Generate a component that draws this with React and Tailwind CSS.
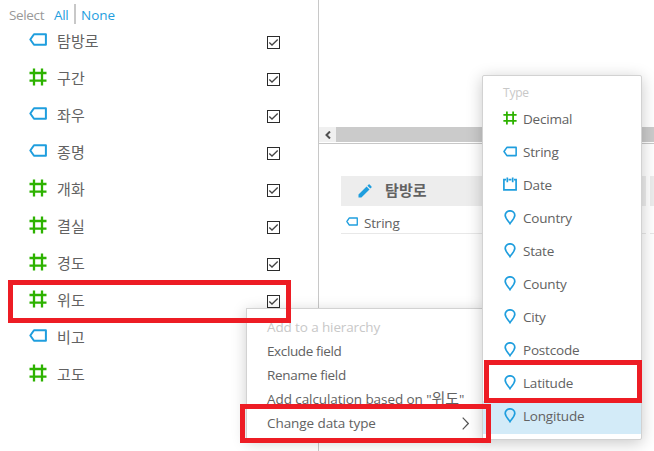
import React from "react";

const Tag = ({ className }) => (
  <svg viewBox="0 0 18 13" className={className} fill="none" stroke="#1f9ede" strokeWidth="2">
    <path d="M5 1.2H16.9V11.8H5L1.3 6.5Z" strokeLinejoin="round" />
  </svg>
);

const Hash = ({ className }) => (
  <svg viewBox="0 0 18 18" className={className} fill="none" stroke="#2db200" strokeWidth="2.3">
    <path d="M5 0.5V17.5M13 0.5V17.5M0.5 5H17.5M0.5 12.7H17.5" />
  </svg>
);

const Pin = ({ className }) => (
  <svg viewBox="0 0 12 15" className={className} fill="none" stroke="#1f9ede" strokeWidth="1.7">
    <path d="M6 13.6C4.6 11.2 1.2 8.4 1.2 5.3A4.8 4.5 0 0 1 10.8 5.3C10.8 8.4 7.4 11.2 6 13.6Z" />
  </svg>
);

const Calendar = ({ className }) => (
  <svg viewBox="0 0 14 14" className={className} fill="none" stroke="#1f9ede" strokeWidth="1.7">
    <path d="M0.9 2.6H3M5.6 2.6H8.4M11 2.6H13.1M0.9 1.8V12.9H13.1V1.8M4.3 0.5V5.3M9.7 0.5V5.3" />
  </svg>
);

const Check = () => (
  <svg viewBox="0 0 13 13" className="block h-[13px] w-[13px]" fill="none">
    <rect x="0.5" y="0.5" width="12" height="12" stroke="#2b2b2b" />
    <path d="M2.3 6.5L5 9L10.7 3.5" stroke="#444" strokeWidth="1.3" />
  </svg>
);

const fields = [
  ["tag", "탐방로"],
  ["hash", "구간"],
  ["tag", "좌우"],
  ["tag", "종명"],
  ["hash", "개화"],
  ["hash", "결실"],
  ["hash", "경도"],
  ["hash", "위도"],
  ["tag", "비고"],
  ["hash", "고도"],
];

const types = [
  ["hash", "Decimal"],
  ["tag", "String"],
  ["date", "Date"],
  ["pin", "Country"],
  ["pin", "State"],
  ["pin", "County"],
  ["pin", "City"],
  ["pin", "Postcode"],
  ["pin", "Latitude"],
  ["pin", "Longitude"],
];

const typeIcons = {
  hash: <Hash className="h-[14px] w-[14px]" />,
  tag: <Tag className="h-[11px] w-[14px]" />,
  date: <Calendar className="h-[14px] w-[14px]" />,
  pin: <Pin className="h-[15px] w-[12px]" />,
};

export default function App() {
  return (
    <div className="relative flex h-[451px] w-[654px] overflow-hidden bg-white font-['Open_Sans','Noto_Sans_CJK_KR',sans-serif] text-[13.5px] tracking-[-0.2px] text-[#626262]">
      <div className="flex w-[319px] shrink-0 flex-col border-r border-[#c8c8c8]">
        <div className="flex h-[22px] shrink-0 items-start whitespace-nowrap pl-[9px] pt-1 leading-[22px] tracking-[-0.35px]">
          <span className="w-[45px] text-[#999]">Select</span>
          <span className="w-[20px] text-[#1f9ede]">All</span>
          <span className="h-5 w-[2px] bg-[#c8c8c8]" />
          <span className="ml-[5px] tracking-normal text-[#1f9ede]">None</span>
        </div>
        {fields.map(([kind, name], i) => (
          <div key={i} className="flex h-[37px] shrink-0 items-center pl-[29px]">
            {kind === "hash" ? <Hash className="mb-[1px] h-[18px] w-[18px]" /> : <Tag className="mb-[2px] h-[13px] w-[18px]" />}
            <span className="ml-[10px] w-[210px] text-[15px] leading-5 tracking-[0.1px]">{name}</span>
            <span className="mt-[4px]"><Check /></span>
          </div>
        ))}
      </div>

      <div className="flex min-w-0 flex-1 flex-col">
        <div className="h-[127px] shrink-0" />
        <div className="flex h-[15px] shrink-0 bg-[#cbcbcb]">
          <div className="flex w-[17px] items-center justify-center bg-[#f0f0f0]">
            <svg viewBox="0 0 6 8" className="h-[8px] w-[6px]" fill="none" stroke="#505050" strokeWidth="2">
              <path d="M5 0.5L1.5 4L5 7.5" />
            </svg>
          </div>
        </div>
        <div className="mt-px h-px shrink-0 bg-[#c8c8c8]" />
        <div className="flex gap-1 pl-[22px] pt-[32px]">
          <div className="w-[305px] shrink-0">
            <div className="flex h-[30px] items-center bg-[#ededed] pl-[17px]">
              <svg viewBox="0 0 14 14" className="h-[14px] w-[14px]" fill="#1f9ede">
                <path d="M0.5 13.5V10.6L8.6 2.5L11.5 5.4L3.4 13.5ZM9.4 1.7L10.6 0.5Q11.1 0.1 11.6 0.5L13.5 2.4Q13.9 2.9 13.5 3.4L12.3 4.6Z" />
              </svg>
              <span className="ml-[13px] pb-[3px] text-[15px] font-bold leading-5 tracking-[0.1px]">탐방로</span>
            </div>
            <div className="flex h-[28px] items-center border-b border-[#e8e8e8] pl-[5px]">
              <Tag className="mt-[3px] h-[9px] w-[12px]" />
              <span className="ml-[6px] pt-[8px]">String</span>
            </div>
          </div>
          <div className="w-[305px] shrink-0">
            <div className="h-[30px] bg-[#ededed]" />
            <div className="h-[28px] border-b border-[#e8e8e8]" />
          </div>
        </div>
      </div>

      <div className="absolute left-[246px] top-[308px] h-[131px] w-[238px] whitespace-nowrap border border-[#d2d2d2] bg-white pl-5 pt-[6px] leading-6 shadow-[0_3px_14px_rgba(0,0,0,0.2)]">
        <div className="h-6 tracking-[-0.12px] text-[#c8c8c8]">Add to a hierarchy</div>
        <div className="h-6 tracking-[-0.38px]">Exclude field</div>
        <div className="h-6 tracking-[-0.3px]">Rename field</div>
        <div className="h-6 tracking-[-0.08px]">Add calculation based on "<span className="text-[15px] leading-5">위도</span>"</div>
        <div className="flex h-6 items-center justify-between pr-[14px] tracking-[-0.07px]">
          Change data type
          <svg viewBox="0 0 7 13" className="h-[13px] w-[7px]" fill="none" stroke="#555" strokeWidth="1.2">
            <path d="M0.7 0.7L6.3 6.5L0.7 12.3" />
          </svg>
        </div>
      </div>

      <div className="absolute left-[482px] top-[75px] h-[365px] w-[160px] rounded-[2px] border border-[#d2d2d2] bg-white shadow-[0_3px_16px_rgba(0,0,0,0.22)]">
        <div className="flex h-[28px] items-center pl-5 pt-[6px] text-[12px] text-[#c8c8c8]">Type</div>
        {types.map(([kind, name]) => (
          <div key={name} className={name === "Longitude" ? "flex h-[33px] items-center bg-[#d3ebf8] pb-[2px] pl-5" : "flex h-[33px] items-center pb-[2px] pl-5"}>
            <span className="mb-[3px] flex w-[14px] justify-center">{typeIcons[kind]}</span>
            <span className="ml-[6px]">{name}</span>
          </div>
        ))}
      </div>

      <div className="absolute left-[8px] top-[280px] h-[43px] w-[283px] border-5 border-[#ed1c24]" />
      <div className="absolute left-[240px] top-[404px] h-[39px] w-[251px] border-5 border-[#ed1c24]" />
      <div className="absolute left-[484px] top-[360px] h-[43px] w-[158px] border-5 border-[#ed1c24]" />
    </div>
  );
}
